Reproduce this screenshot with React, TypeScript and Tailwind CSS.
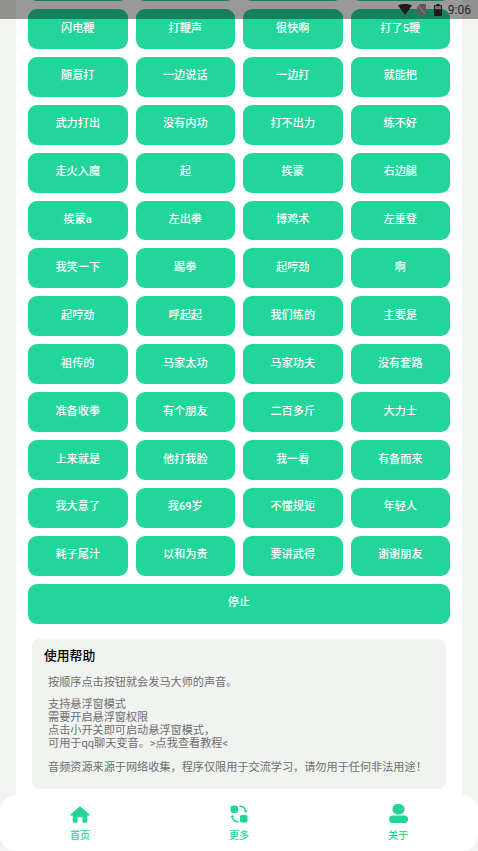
import React from 'react';

const ROWS = [
  ['', '', '', ''],
  ['闪电鞭', '打鞭声', '很快啊', '打了5鞭'],
  ['随意打', '一边说话', '一边打', '就能把'],
  ['武力打出', '没有内功', '打不出力', '练不好'],
  ['走火入魔', '起', '挨蒙', '右边腿'],
  ['挨蒙a', '左出拳', '博鸡术', '左重登'],
  ['我笑一下', '踢拳', '起哼劲', '啊'],
  ['起哼劲', '呼起起', '我们练的', '主要是'],
  ['祖传的', '马家太功', '马家功夫', '没有套路'],
  ['准备收拳', '有个朋友', '二百多斤', '大力士'],
  ['上来就是', '他打我脸', '我一看', '有备而来'],
  ['我大意了', '我69岁', '不懂规矩', '年轻人'],
  ['耗子尾汁', '以和为贵', '要讲武得', '谢谢朋友'],
];

const FONT = "font-['Roboto','Noto_Sans_CJK_SC',sans-serif]";

const SoundButton = ({ label }: { label: string }) => (
  <button className="h-[39.9px] rounded-[9px] bg-[#22d59a] text-[11.15px] font-medium text-white">
    {label}
  </button>
);

const StatusBar = () => (
  <div className="absolute inset-x-0 top-0 flex h-[19px] items-center justify-end bg-black/40 pr-[7px]">
    <svg width="14" height="11" viewBox="0 0 14 11">
      <path d="M0 1.5C2 .4 4.5 0 7 0s5 .4 7 1.5L7 11z" fill="#1d1d1d" />
    </svg>
    <svg width="9" height="11" viewBox="0 0 9 11" className="ml-[5px]">
      <path d="M3 0h6v11H0V3z" fill="#5c5c5c" />
      <path d="M0 1l9 9.5" stroke="#8a8a8a" strokeWidth="1" />
    </svg>
    <svg width="8" height="12" viewBox="0 0 8 12" className="ml-[8px]">
      <path d="M2.5 0h3v1.2H8V12H0V1.2h2.5z" fill="#1a1a1a" />
      <rect x="1" y="2.2" width="6" height="3" fill="#777" />
    </svg>
    <span className="ml-[6px] text-[12px] leading-none text-[#262626]">9:06</span>
  </div>
);

const HomeIcon = () => (
  <svg width="20" height="17" viewBox="0 0 20 17">
    <path
      d="M10 0.3 19.6 8.6c.4.4.1 1-.4 1H17.300V15.500c0 .8-.6 1.300-1.300 1.300H12.500V11.200H7.500V16.800H4c-.7 0-1.300-.5-1.300-1.300V9.600H.8c-.5 0-.8-.6-.4-1z"
      fill="#22d59a"
    />
  </svg>
);

const MoreIcon = () => (
  <svg width="18" height="18" viewBox="0 0 18 18" fill="none">
    <rect x="0.500" y="0.500" width="7.500" height="7.500" rx="2.500" fill="#22d59a" />
    <rect x="10" y="10" width="7.500" height="7.500" rx="1.500" fill="#22d59a" />
    <path d="M10 1.300c3 0 5.200 1.700 5.800 5" stroke="#22d59a" strokeWidth="1.500" strokeLinecap="round" />
    <path d="M13.500 5.600h4.400l-2.200 2.400z" fill="#22d59a" />
    <path d="M8 16.700c-3 0-5.200-1.700-5.800-5" stroke="#22d59a" strokeWidth="1.500" strokeLinecap="round" />
    <path d="M0 12.300h4.400l-2.200-2.400z" fill="#22d59a" />
  </svg>
);

const UserIcon = () => (
  <svg width="19" height="19" viewBox="0 0 19 19">
    <rect x="3.500" y="0" width="12" height="10.500" rx="5" fill="#22d59a" />
    <rect x="0" y="11.500" width="19" height="7.500" rx="3.750" fill="#22d59a" />
  </svg>
);

const NavItem = ({ icon, label }: { icon: React.ReactNode; label: string }) => (
  <div className="flex w-[60px] flex-col items-center">
    <div className="flex h-[20px] items-end">{icon}</div>
    <span className="mt-[6px] text-[10px] leading-[14px] font-medium text-[#22d59a]">{label}</span>
  </div>
);

export default function App() {
  return (
    <div className={`relative flex h-[851px] w-full flex-col overflow-hidden bg-[#f2f4f1] ${FONT}`}>
      <div className="flex-1 overflow-hidden px-4">
        <div className="-mt-[38.9px] h-[900px] bg-white px-3">
          <div className="grid grid-cols-4 gap-2">
            {ROWS.flat().map((label, i) => (
              <SoundButton key={i} label={label} />
            ))}
            <button className="col-span-4 h-[39.9px] rounded-[9px] bg-[#22d59a] text-[11.15px] font-medium text-white">
              停止
            </button>
          </div>

          <div className="mx-1 mt-[15.5px] h-[150px] rounded-[8px] bg-[#f1f3f0] px-3 pt-[8px]">
            <h2 className="text-[12.8px] leading-[18px] font-medium text-black">使用帮助</h2>
            <div className="mt-[11px] px-1 text-[11.15px] leading-[13px] text-[#6f6f6f]">
              <p>按顺序点击按钮就会发马大师的声音。</p>
              <p className="mt-[9px]">支持悬浮窗模式</p>
              <p>需要开启悬浮窗权限</p>
              <p>点击小开关即可启动悬浮窗模式，</p>
              <p>可用于qq聊天变音。&gt;点我查看教程&lt;</p>
              <p className="mt-[11px]">音频资源来源于网络收集，程序仅限用于交流学习，请勿用于任何非法用途！</p>
            </div>
          </div>
        </div>
      </div>

      <nav className="flex h-[56px] items-start justify-between rounded-[16px] bg-white px-[50px] pt-[8px]">
        <NavItem icon={<HomeIcon />} label="首页" />
        <NavItem icon={<MoreIcon />} label="更多" />
        <NavItem icon={<UserIcon />} label="关于" />
      </nav>

      <StatusBar />
    </div>
  );
}
